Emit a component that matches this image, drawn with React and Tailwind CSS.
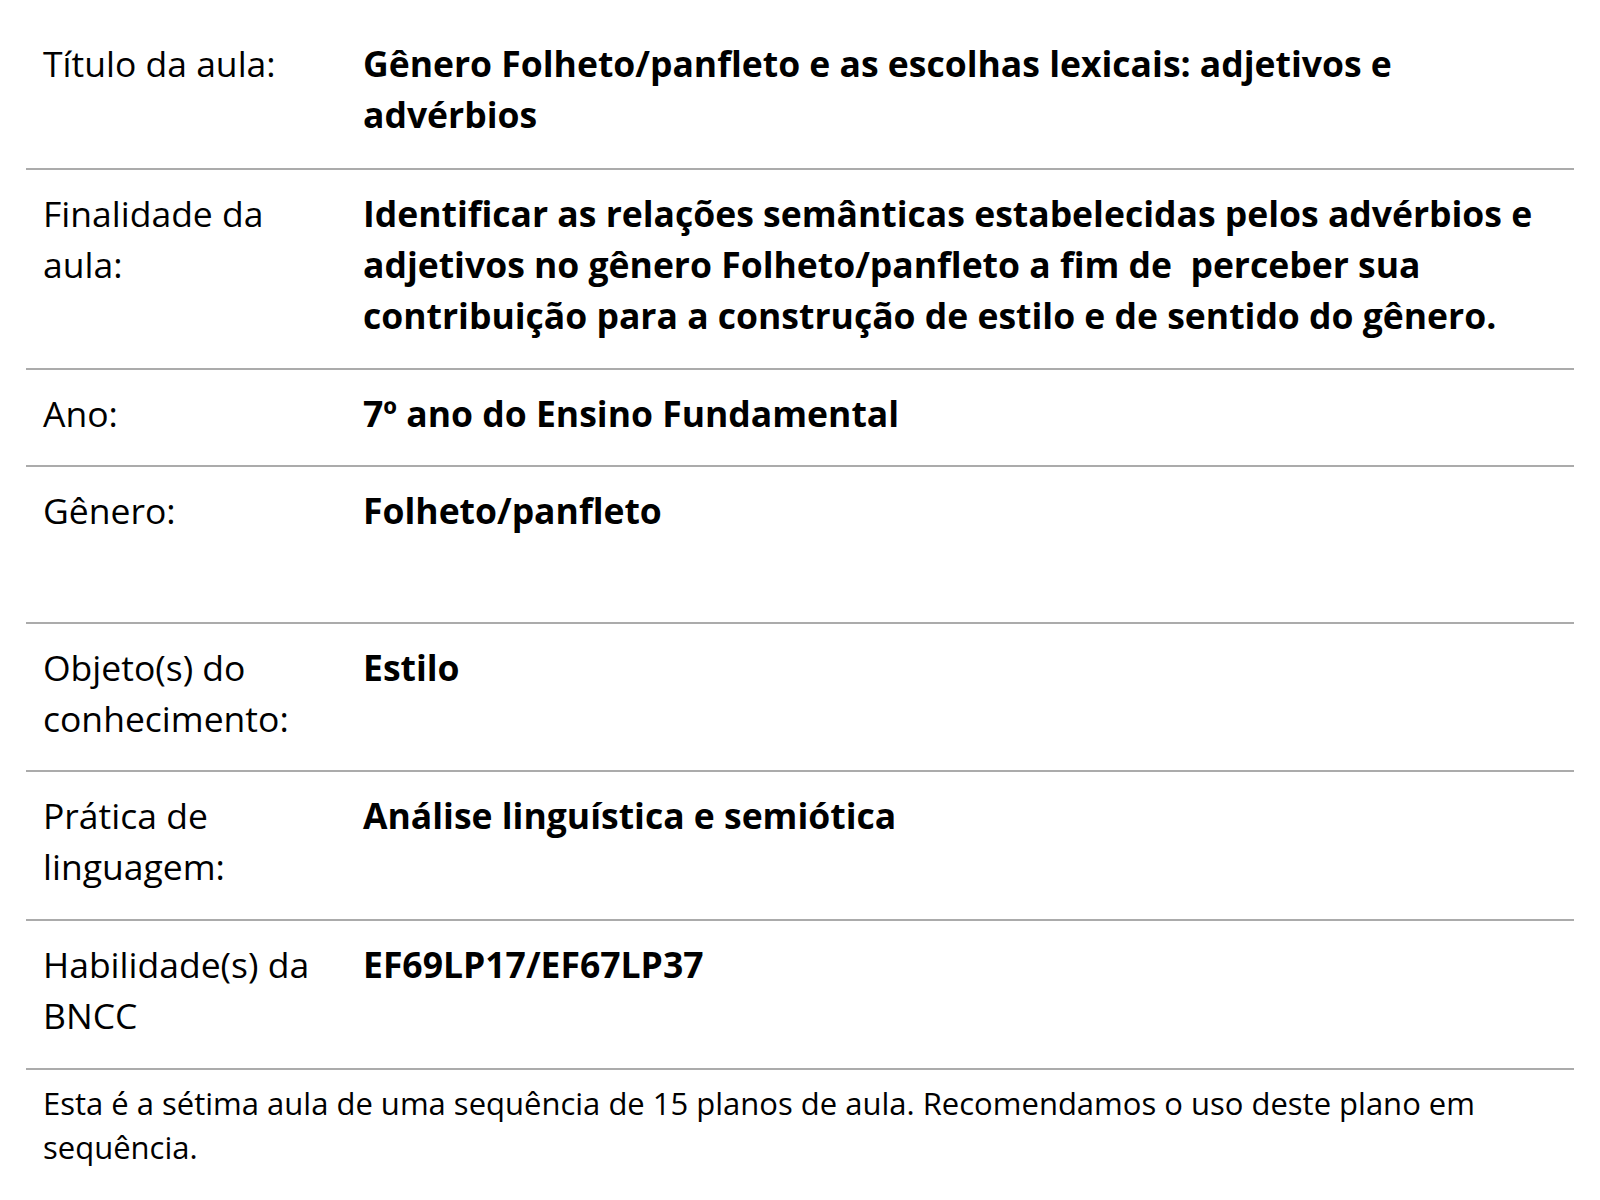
const rows = [
  {
    label: "Título da aula:",
    value: "Gênero Folheto/panfleto e as escolhas lexicais: adjetivos e advérbios",
    top: "pt-[38px]",
    bottom: "pb-[28px]",
  },
  {
    label: "Finalidade da aula:",
    value:
      "Identificar as relações semânticas estabelecidas pelos advérbios e adjetivos no gênero Folheto/panfleto a fim de\u00a0 perceber sua contribuição para a construção de estilo e de sentido do gênero.",
    bottom: "pb-[27px]",
  },
  { label: "Ano:", value: "7º ano do Ensino Fundamental" },
  { label: "Gênero:", value: "Folheto/panfleto", bottom: "pb-[86px]" },
  { label: "Objeto(s) do conhecimento:", value: "Estilo" },
  { label: "Prática de linguagem:", value: "Análise linguística e semiótica", bottom: "pb-[27px]" },
  { label: "Habilidade(s) da BNCC", value: "EF69LP17/EF67LP37", bottom: "pb-[27px]" },
];

export default function App() {
  return (
    <div
      className="min-h-[1200px] bg-white px-[26px] text-black"
      style={{ fontFamily: '"Open Sans", "Liberation Sans", sans-serif' }}
    >
      <div>
        {rows.map((row, i) => (
          <div
            key={i}
            className={
              "grid grid-cols-[320px_1fr] border-b-2 border-[#ababab] px-[17px] " +
              (row.top || "pt-[18px]") +
              " " +
              (row.bottom || "pb-[26px]")
            }
          >
            <div className="pr-[24px] text-[35.5px] leading-[51px]">{row.label}</div>
            <div className="text-[35.5px] font-bold leading-[51px]">{row.value}</div>
          </div>
        ))}
      </div>
      <p className="px-[17px] pt-[11px] text-[31px] leading-[44px]">
        Esta é a sétima aula de uma sequência de 15 planos de aula. Recomendamos o uso deste plano em
        sequência.
      </p>
    </div>
  );
}
